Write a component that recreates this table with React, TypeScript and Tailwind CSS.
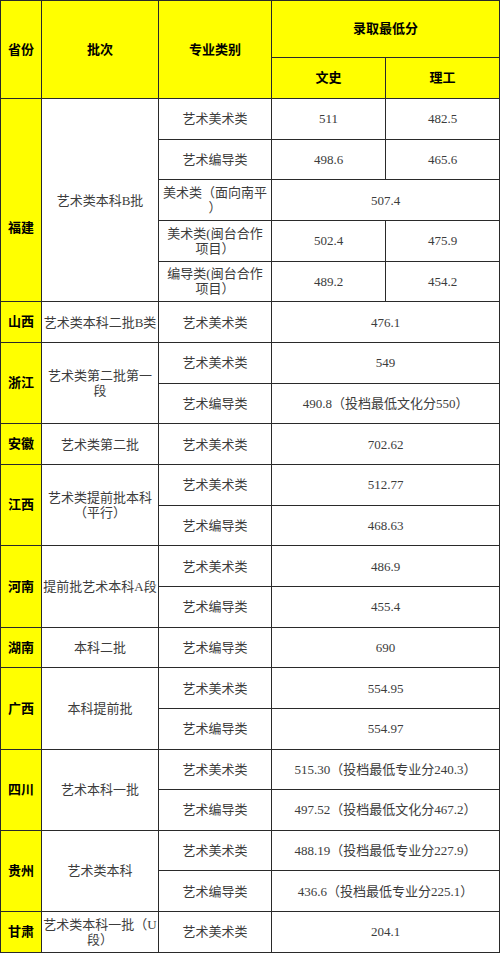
import React from "react";

type Item = { major: string; wen: string; li?: string };
type Group = { prov: string; batch: string; items: Item[]; provPad?: string };

const groups: Group[] = [
  {
    prov: "福建",
    batch: "艺术类本科B批",
    provPad: "pt-[56px]",
    items: [
      { major: "艺术美术类", wen: "511", li: "482.5" },
      { major: "艺术编导类", wen: "498.6", li: "465.6" },
      { major: "美术类（面向南平\n）", wen: "507.4" },
      { major: "美术类(闽台合作\n项目）", wen: "502.4", li: "475.9" },
      { major: "编导类(闽台合作\n项目）", wen: "489.2", li: "454.2" },
    ],
  },
  {
    prov: "山西",
    batch: "艺术类本科二批B类",
    items: [{ major: "艺术美术类", wen: "476.1" }],
  },
  {
    prov: "浙江",
    batch: "艺术类第二批第一\n段",
    items: [
      { major: "艺术美术类", wen: "549" },
      { major: "艺术编导类", wen: "490.8（投档最低文化分550）" },
    ],
  },
  {
    prov: "安徽",
    batch: "艺术类第二批",
    items: [{ major: "艺术美术类", wen: "702.62" }],
  },
  {
    prov: "江西",
    batch: "艺术类提前批本科\n（平行）",
    items: [
      { major: "艺术美术类", wen: "512.77" },
      { major: "艺术编导类", wen: "468.63" },
    ],
  },
  {
    prov: "河南",
    batch: "提前批艺术本科A段",
    items: [
      { major: "艺术美术类", wen: "486.9" },
      { major: "艺术编导类", wen: "455.4" },
    ],
  },
  {
    prov: "湖南",
    batch: "本科二批",
    items: [{ major: "艺术编导类", wen: "690" }],
  },
  {
    prov: "广西",
    batch: "本科提前批",
    items: [
      { major: "艺术美术类", wen: "554.95" },
      { major: "艺术编导类", wen: "554.97" },
    ],
  },
  {
    prov: "四川",
    batch: "艺术本科一批",
    items: [
      { major: "艺术美术类", wen: "515.30（投档最低专业分240.3）" },
      { major: "艺术编导类", wen: "497.52（投档最低文化分467.2）" },
    ],
  },
  {
    prov: "贵州",
    batch: "艺术类本科",
    items: [
      { major: "艺术美术类", wen: "488.19（投档最低专业分227.9）" },
      { major: "艺术编导类", wen: "436.6（投档最低专业分225.1）" },
    ],
  },
  {
    prov: "甘肃",
    batch: "艺术类本科一批（U\n段）",
    items: [{ major: "艺术美术类", wen: "204.1" }],
  },
];

const head =
  "border border-[#2a2a2a] bg-[#ffff00] text-center align-middle font-bold text-[13px] text-black font-['Liberation_Sans','Noto_Sans_CJK_SC',sans-serif]";
const cell =
  "border border-[#2a2a2a] bg-white text-center align-middle text-[13px] leading-[15px] text-[#3c3c3c] whitespace-pre-line px-0";

export default function App() {
  return (
    <div className="w-[500px] bg-white">
      <table className="w-[499px] table-fixed border-collapse font-['Liberation_Serif','Noto_Sans_CJK_SC',serif]">
        <colgroup>
          <col className="w-[41px]" />
          <col className="w-[117px]" />
          <col className="w-[113px]" />
          <col className="w-[114px]" />
          <col className="w-[114px]" />
        </colgroup>
        <thead>
          <tr className="h-[57px]">
            <th rowSpan={2} className={head}>省份</th>
            <th rowSpan={2} className={head}>批次</th>
            <th rowSpan={2} className={head}>专业类别</th>
            <th colSpan={2} className={head}>录取最低分</th>
          </tr>
          <tr className="h-[41px]">
            <th className={head}>文史</th>
            <th className={head}>理工</th>
          </tr>
        </thead>
        <tbody>
          {groups.map((g) =>
            g.items.map((it, i) => (
              <tr key={g.prov + i} className="h-[40.67px]">
                {i === 0 && (
                  <>
                    <td rowSpan={g.items.length} className={`${head} ${g.provPad ?? ""}`}>
                      {g.prov}
                    </td>
                    <td rowSpan={g.items.length} className={`${cell} whitespace-nowrap`}>
                      {g.batch}
                    </td>
                  </>
                )}
                <td className={`${cell} leading-4`}>{it.major}</td>
                {it.li ? (
                  <>
                    <td className={cell}>{it.wen}</td>
                    <td className={cell}>{it.li}</td>
                  </>
                ) : (
                  <td colSpan={2} className={`${cell} whitespace-nowrap`}>{it.wen}</td>
                )}
              </tr>
            ))
          )}
        </tbody>
      </table>
    </div>
  );
}
